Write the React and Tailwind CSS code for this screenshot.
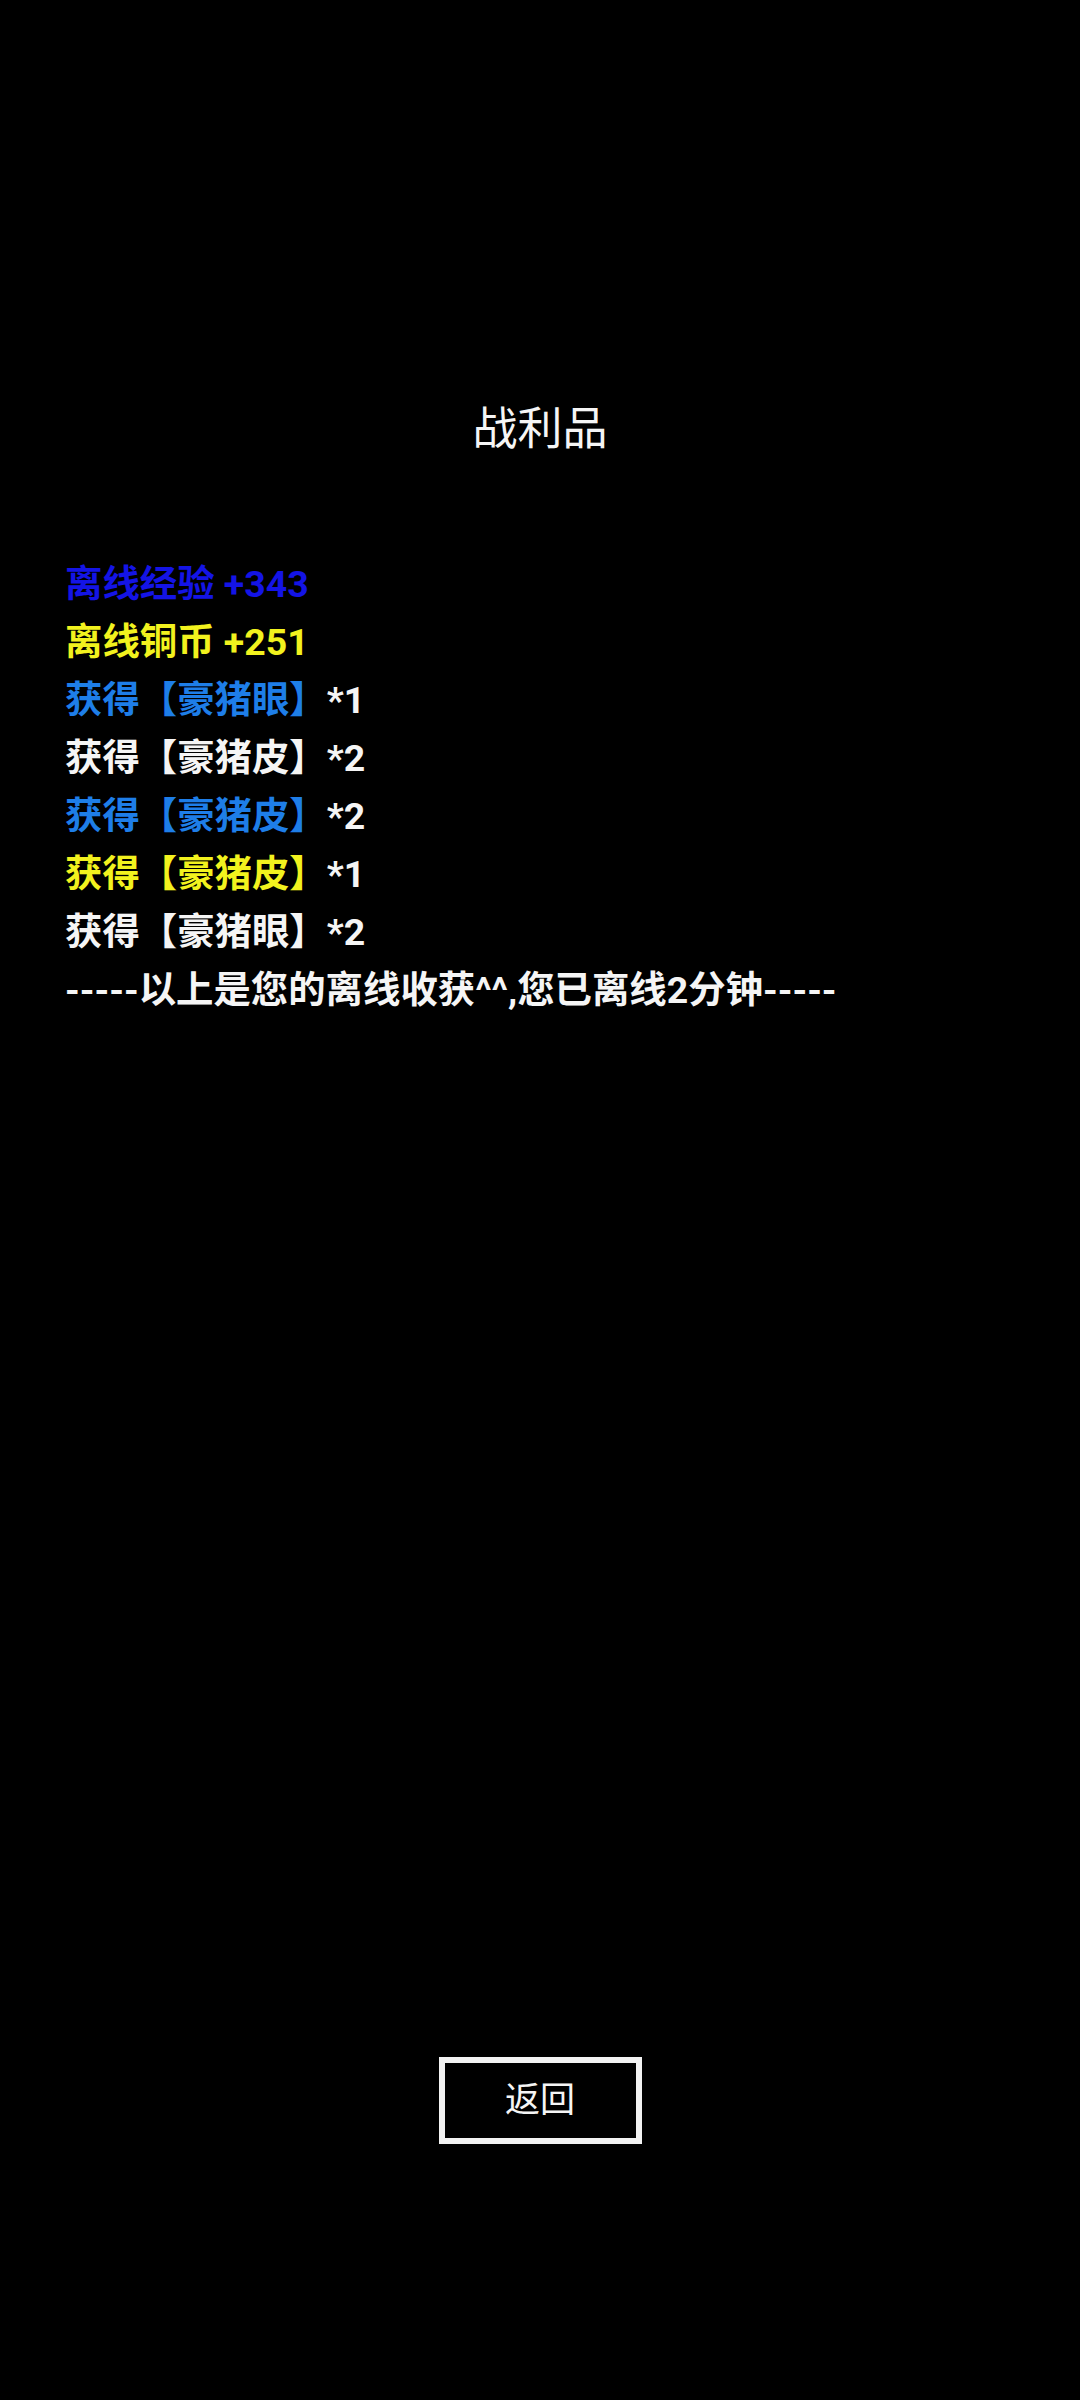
import React from "react";

const lines = [
  [{ t: "离线经验 +343", c: "text-[#1414e6]" }],
  [{ t: "离线铜币 +251", c: "text-[#f2f21e]" }],
  [{ t: "获得【豪猪眼】", c: "text-[#1e7ee8]" }, { t: "*1", c: "text-[#f5f5f5]" }],
  [{ t: "获得【豪猪皮】", c: "text-[#f5f5f5]" }, { t: "*2", c: "text-[#f5f5f5]" }],
  [{ t: "获得【豪猪皮】", c: "text-[#1e7ee8]" }, { t: "*2", c: "text-[#f5f5f5]" }],
  [{ t: "获得【豪猪皮】", c: "text-[#f2f21e]" }, { t: "*1", c: "text-[#f5f5f5]" }],
  [{ t: "获得【豪猪眼】", c: "text-[#f5f5f5]" }, { t: "*2", c: "text-[#f5f5f5]" }],
  [{ t: "-----以上是您的离线收获^^,您已离线2分钟-----", c: "text-[#f5f5f5]" }],
];

export default function App() {
  return (
    <div
      className="w-[1080px] h-[2400px] bg-black flex flex-col"
      style={{ fontFamily: '"Roboto", "Noto Sans CJK SC", sans-serif' }}
    >
      <div className="pt-[400px] text-center text-[#f5f5f5] text-[45px] leading-[60px]">
        战利品
      </div>
      <div className="mt-[95px] px-[65px] flex flex-col">
        {lines.map((segs, i) => (
          <div key={i} className="text-[37.4px] leading-[58px] font-bold whitespace-nowrap">
            {segs.map((s, j) => (
              <span key={j} className={s.c}>
                {s.t}
              </span>
            ))}
          </div>
        ))}
      </div>
      <div className="mt-[1038px] flex justify-center">
        <div className="w-[203px] h-[87px] border-[6px] border-[#f2f2f2] flex items-center justify-center text-[#f5f5f5] text-[35px] leading-none">
          返回
        </div>
      </div>
    </div>
  );
}
